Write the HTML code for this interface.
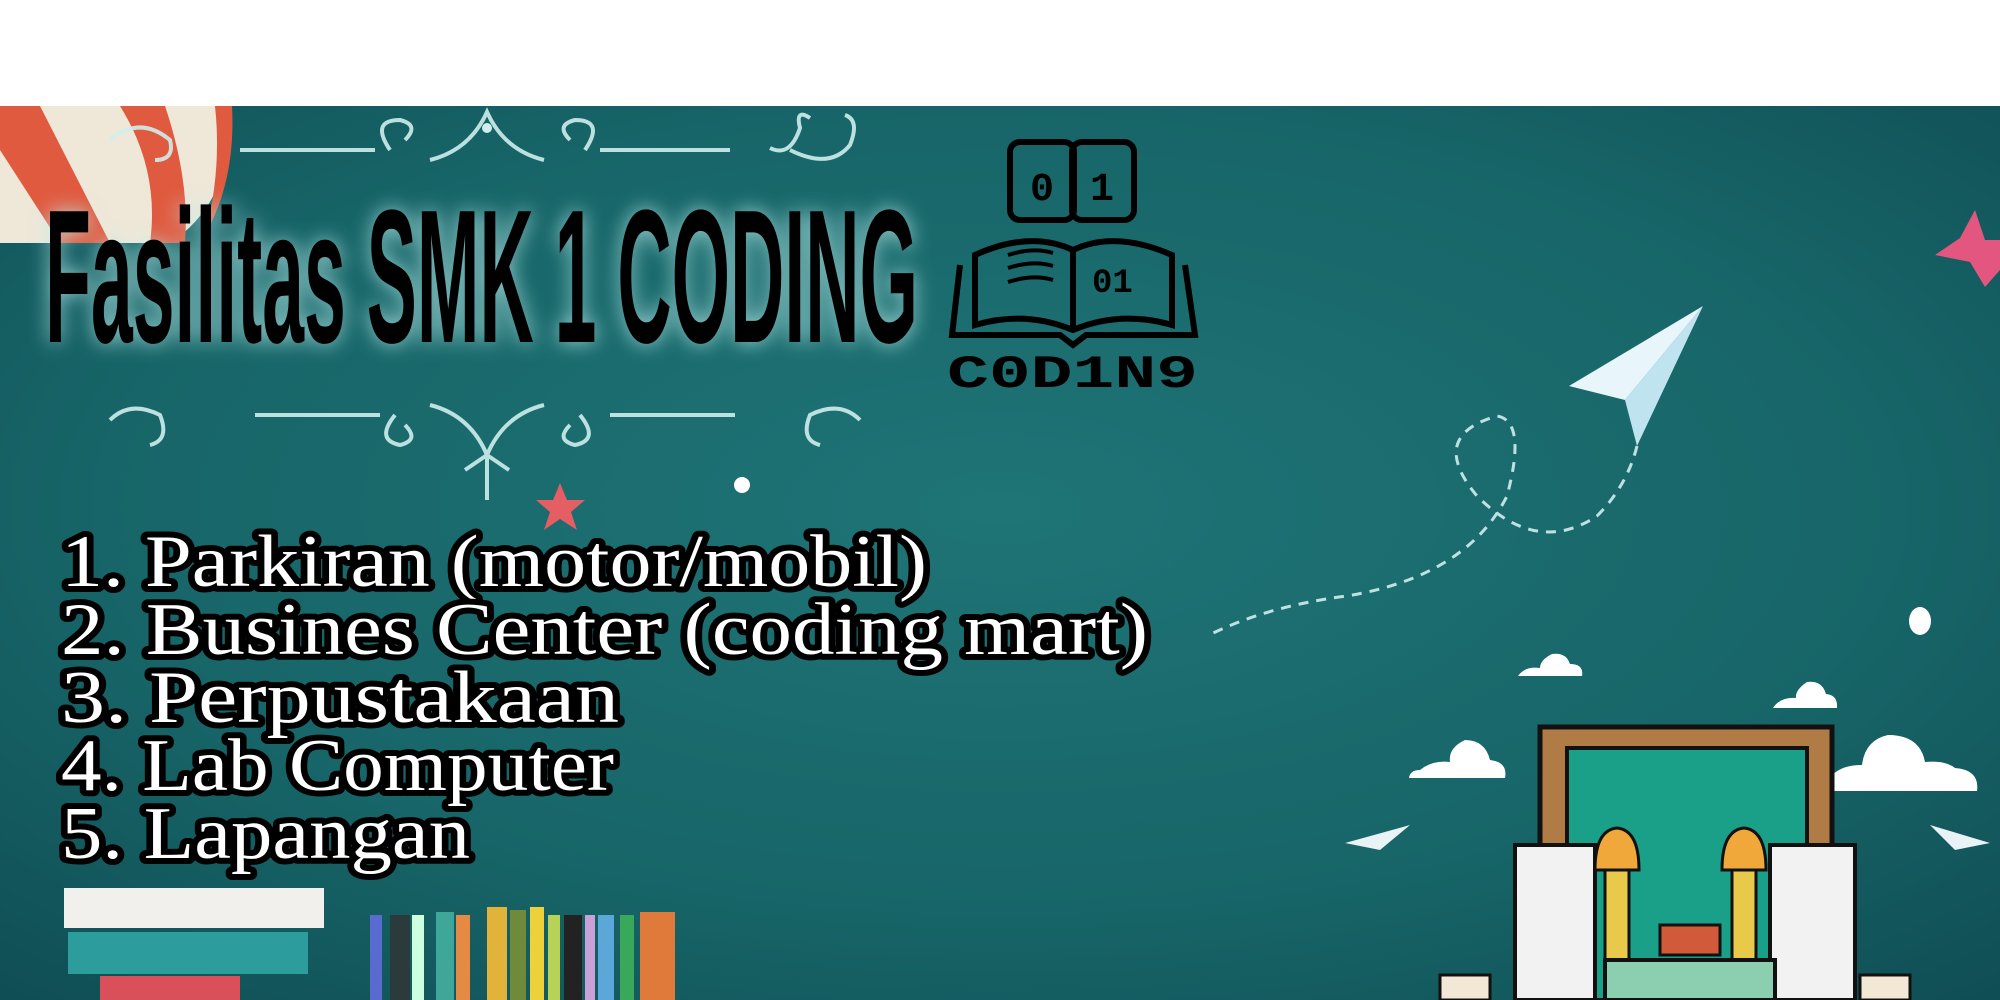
<!DOCTYPE html>
<html><head><meta charset="utf-8"><style>
html,body{margin:0;padding:0;background:#fff;width:2000px;height:1000px;overflow:hidden}
svg{display:block}
</style></head><body>
<svg width="2000" height="1000" viewBox="0 0 2000 1000" xmlns="http://www.w3.org/2000/svg">
<defs>
<radialGradient id="bg" cx="0.5" cy="0.45" r="0.75">
<stop offset="0" stop-color="#1f7476"/><stop offset="0.6" stop-color="#176568"/><stop offset="1" stop-color="#0f4d54"/>
</radialGradient>
<filter id="glow" x="-10%" y="-30%" width="120%" height="160%"><feGaussianBlur stdDeviation="10"/></filter>
</defs>
<rect x="0" y="0" width="2000" height="106" fill="#fff"/>
<rect x="0" y="106" width="2000" height="894" fill="url(#bg)"/>
<!-- balloon -->
<g>
<path d="M0 106 L230 106 Q235 200 170 243 L0 243 Z" fill="#efe7d8"/>
<path d="M0 106 L40 106 L110 243 L60 243 L0 150 Z" fill="#e05a3f"/>
<path d="M120 106 L165 106 Q190 180 185 243 L150 243 Q160 170 120 106 Z" fill="#e05a3f"/>
<path d="M215 106 L232 106 Q236 180 205 235 Q222 170 215 106Z" fill="#e05a3f"/>
</g>
<!-- ornaments -->
<g stroke="#cfeeed" stroke-width="4" fill="none" opacity="0.9">
<path d="M240 150 L375 150 M600 150 L730 150"/>
<path d="M390 150 q-20 -30 10 -30 q20 5 5 20 M585 150 q20 -30 -10 -30 q-20 5 -5 20"/>
<path d="M430 160 q40 -10 57 -48 q17 38 57 48"/>
<path d="M770 148 q20 10 30 -20 q-5 -20 10 -10 M790 150 q40 20 60 -5 q10 -25 -5 -30"/>
<path d="M110 140 q30 -25 60 0 q5 20 -15 20"/>
<path d="M255 415 L380 415 M610 415 L735 415"/>
<path d="M110 420 q20 -20 50 -5 q10 25 -10 30 M860 420 q-20 -20 -50 -5 q-10 25 10 30"/>
<path d="M395 415 q-20 25 5 30 q20 -5 5 -20 M580 415 q20 25 -5 30 q-20 -5 -5 -20"/>
<path d="M430 405 q40 10 57 50 q17 -40 57 -50 M487 455 L487 500 M465 470 L487 455 L509 470"/>
</g>
<circle cx="487" cy="128" r="5" fill="#cfeeed"/>
<!-- title glow & text -->
<text x="45" y="342" textLength="873" lengthAdjust="spacingAndGlyphs" font-family="Liberation Sans Narrow, Liberation Sans, sans-serif" font-weight="bold" font-size="190" fill="#bdeeee" filter="url(#glow)" opacity="0.8">Fasilitas SMK 1 CODING</text>
<text x="45" y="342" textLength="873" lengthAdjust="spacingAndGlyphs" font-family="Liberation Sans Narrow, Liberation Sans, sans-serif" font-weight="bold" font-size="190" fill="#000">Fasilitas SMK 1 CODING</text>
<!-- logo -->
<g stroke="#000" stroke-width="6" fill="none">
<rect x="1010" y="142" width="64" height="78" rx="10"/>
<rect x="1072" y="142" width="62" height="78" rx="10"/>
<path d="M975 255 Q1030 230 1073 250 Q1115 230 1172 255 L1172 325 Q1120 310 1073 330 Q1025 310 975 325 Z"/>
<path d="M1073 250 L1073 330"/>
<path d="M960 265 L952 335 L1060 335 L1073 345 L1086 335 L1195 335 L1185 265"/>
<path d="M1008 255 q25 -8 45 -2 M1008 268 q25 -8 45 -2 M1008 282 q25 -8 45 -2" stroke-width="4"/>
</g>
<text x="1030" y="200" font-family="Liberation Mono, monospace" font-weight="bold" font-size="40" fill="#000">0</text>
<text x="1090" y="200" font-family="Liberation Mono, monospace" font-weight="bold" font-size="40" fill="#000">1</text>
<text x="1092" y="292" font-family="Liberation Mono, monospace" font-weight="bold" font-size="34" fill="#000">01</text>
<text x="947" y="387" textLength="251" lengthAdjust="spacingAndGlyphs" font-family="Liberation Mono, monospace" font-weight="bold" font-size="46" fill="#000">C0D1N9</text>
<!-- plane -->
<path d="M1703 306 L1569 386 L1625 400 Z" fill="#e8f6fb"/>
<path d="M1703 306 L1625 400 L1637 446 Z" fill="#bfe4f0"/>
<path d="M1637 446 q-10 40 -40 70 q-60 40 -120 -20 q-50 -60 20 -80 q30 5 10 80 q-40 80 -160 100 q-80 10 -140 40" stroke="#bfe0e4" stroke-width="3" stroke-dasharray="10 8" fill="none"/>
<!-- stars dots -->
<path d="M1975 210 L1985 240 L2000 240 L2000 270 L1985 287 L1970 262 L1935 255 L1960 238 Z" fill="#e2567f"/>
<path d="M560 483 L567 500 L585 500 L571 512 L577 530 L560 519 L544 530 L550 512 L536 500 L553 500Z" fill="#e55e63"/>
<circle cx="742" cy="485" r="8" fill="#fff"/>
<ellipse cx="1920" cy="621" rx="11" ry="14" fill="#fff"/>
<!-- clouds -->
<g fill="#fff">
<path d="M1518 676 L1582 676 Q1584 664 1570 664 Q1566 652 1552 654 Q1540 660 1540 668 Q1525 666 1518 676Z"/>
<path d="M1773 708 L1837 708 Q1838 695 1826 694 Q1822 680 1807 682 Q1795 690 1796 698 Q1780 697 1773 708Z"/>
<path d="M1409 778 L1505 778 Q1508 762 1490 760 Q1485 740 1465 740 Q1448 748 1450 762 Q1432 760 1420 770 Q1410 770 1409 778Z"/>
<path d="M1824 791 L1977 791 Q1980 770 1955 768 Q1945 760 1925 762 Q1920 735 1888 735 Q1865 740 1862 765 Q1830 765 1824 791Z"/>
</g>
<!-- chalkboard scene -->
<g>
<rect x="1540" y="727" width="292" height="273" fill="#b07b45" stroke="#111" stroke-width="5"/>
<rect x="1567" y="748" width="240" height="252" fill="#1aa088" stroke="#111" stroke-width="4"/>
<rect x="1515" y="845" width="80" height="155" fill="#f2f2f2" stroke="#111" stroke-width="4"/>
<rect x="1770" y="845" width="85" height="155" fill="#f2f2f2" stroke="#111" stroke-width="4"/>
<rect x="1605" y="860" width="24" height="140" fill="#e8c94a" stroke="#111" stroke-width="3"/>
<rect x="1732" y="860" width="24" height="140" fill="#e8c94a" stroke="#111" stroke-width="3"/>
<path d="M1595 870 q0 -40 22 -42 q22 2 22 42 Z M1722 870 q0 -40 22 -42 q22 2 22 42 Z" fill="#f0a83a" stroke="#111" stroke-width="3"/>
<rect x="1660" y="925" width="60" height="30" fill="#d05a3a" stroke="#111" stroke-width="3"/>
<rect x="1605" y="960" width="170" height="40" fill="#8ccfb0" stroke="#111" stroke-width="4"/>
<rect x="1440" y="975" width="50" height="25" fill="#f3e7d6" stroke="#111" stroke-width="3"/>
<rect x="1860" y="975" width="50" height="25" fill="#f3e7d6" stroke="#111" stroke-width="3"/>
<path d="M1345 843 L1410 825 L1380 850 Z M1990 843 L1930 825 L1955 850Z" fill="#e9f2f4"/>
</g>
<!-- books -->
<g>
<rect x="64" y="888" width="260" height="40" fill="#f2f0ec"/>
<rect x="68" y="932" width="240" height="42" fill="#2c9c9c"/>
<rect x="100" y="976" width="140" height="24" fill="#d94f5a"/>
<rect x="370" y="915" width="12" height="85" fill="#5a6bd0"/>
<rect x="390" y="915" width="20" height="85" fill="#2b3a3a"/>
<rect x="412" y="915" width="12" height="85" fill="#cfd"/>
<rect x="436" y="912" width="18" height="88" fill="#3fa79a"/>
<rect x="456" y="915" width="14" height="85" fill="#e48a45"/>
<rect x="487" y="907" width="20" height="93" fill="#e2b33a"/>
<rect x="510" y="910" width="16" height="90" fill="#6e8a3a"/>
<rect x="530" y="907" width="14" height="93" fill="#ecd13a"/>
<rect x="548" y="915" width="12" height="85" fill="#b7d357"/>
<rect x="564" y="915" width="18" height="85" fill="#222"/>
<rect x="585" y="915" width="10" height="85" fill="#c9a0d8"/>
<rect x="598" y="915" width="16" height="85" fill="#5aa7d8"/>
<rect x="620" y="915" width="14" height="85" fill="#3aa85a"/>
<rect x="640" y="912" width="35" height="88" fill="#e07a3a"/>
</g>
<!-- list -->
<g font-family="Liberation Serif, serif" font-size="74" fill="#fff" stroke="#000" stroke-width="12" stroke-linejoin="round" paint-order="stroke">
<text x="61" y="586" textLength="866" lengthAdjust="spacingAndGlyphs">1. Parkiran (motor/mobil)</text>
<text x="61" y="654" textLength="1087" lengthAdjust="spacingAndGlyphs">2. Busines Center (coding mart)</text>
<text x="61" y="722" textLength="558" lengthAdjust="spacingAndGlyphs">3. Perpustakaan</text>
<text x="61" y="790" textLength="553" lengthAdjust="spacingAndGlyphs">4. Lab Computer</text>
<text x="61" y="858" textLength="409" lengthAdjust="spacingAndGlyphs">5. Lapangan</text>
</g>
</svg>
</body></html>
